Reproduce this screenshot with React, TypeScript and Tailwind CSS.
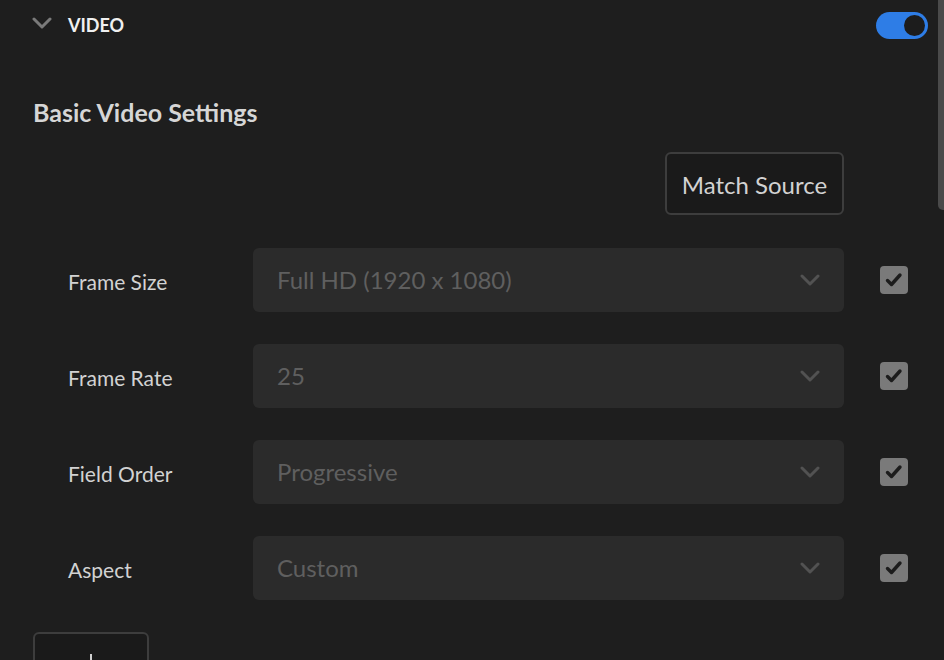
import React from "react";

const rows = [
  { label: "Frame Size", value: "Full HD (1920 x 1080)" },
  { label: "Frame Rate", value: "25" },
  { label: "Field Order", value: "Progressive" },
  { label: "Aspect", value: "Custom" },
];

function Chevron({ className }: { className?: string }) {
  return (
    <svg viewBox="0 0 20 12" className={className} fill="none" stroke="currentColor" strokeWidth="3" strokeLinecap="round" strokeLinejoin="round">
      <path d="M2 2 L10 10 L18 2" />
    </svg>
  );
}

export default function App() {
  return (
    <div
      className="relative w-[944px] h-[660px] overflow-hidden bg-[#1e1e1e] text-[#d4d4d4]"
      style={{ fontFamily: "Lato, 'Open Sans', sans-serif" }}
    >
      {/* scrollbar */}
      <div className="absolute right-0 top-0 w-[6px] h-[210px] bg-[#4a4a4a] rounded-bl-[5px]" />

      {/* header */}
      <div className="flex items-center h-[50px] pl-[32px] pr-[16px]">
        <Chevron className="w-[20px] h-[12px] text-[#7a7a7a] -mt-[4px]" />
        <span className="ml-[16px] text-[18px] font-bold text-[#f0f0f0] mt-[1px]">VIDEO</span>
        <div className="ml-auto w-[52px] h-[27px] rounded-full bg-[#2e7de6] flex items-center justify-end pr-[3px]">
          <div className="w-[21px] h-[21px] rounded-full bg-[#1c1c1c]" />
        </div>
      </div>

      <div className="pl-[33px] pt-[46px] text-[25px] font-bold text-[#d6d6d6] leading-[32px]">
        Basic Video Settings
      </div>

      <div className="flex justify-end pr-[100px] mt-[24px]">
        <div className="w-[179px] h-[63px] rounded-[6px] border-[2px] border-[#3d3d3d] bg-[#1a1a1a] flex items-center justify-center text-[24px] text-[#d2d2d2] pt-[2px]">
          Match Source
        </div>
      </div>

      <div className="flex flex-col gap-[32px] mt-[33px] pl-[68px]">
        {rows.map((r) => (
          <div key={r.label} className="flex items-center h-[64px]">
            <div className="w-[185px] text-[21px] text-[#d2d2d2] pt-[3px]">{r.label}</div>
            <div className="w-[591px] h-[64px] rounded-[6px] bg-[#2b2b2b] flex items-center pl-[24px] pr-[24px]">
              <span className="text-[24px] text-[#5f5f5f]">{r.value}</span>
              <Chevron className="ml-auto w-[20px] h-[12px] text-[#525252]" />
            </div>
            <div className="ml-[36px] w-[28px] h-[28px] rounded-[4px] bg-[#7a7a7a] flex items-center justify-center">
              <svg viewBox="0 0 20 20" className="w-[20px] h-[20px]" fill="none" stroke="#1c1c1c" strokeWidth="3.4" strokeLinecap="round" strokeLinejoin="round">
                <path d="M3.5 10.5 L7.5 14.5 L16 5" />
              </svg>
            </div>
          </div>
        ))}
      </div>

      <div className="ml-[33px] mt-[32px] w-[116px] h-[50px] rounded-[6px] border-[2px] border-[#3d3d3d] bg-[#1a1a1a] flex justify-center pt-[20px]">
        <div className="w-[2px] h-[10px] bg-[#d0d0d0]" />
      </div>
    </div>
  );
}
